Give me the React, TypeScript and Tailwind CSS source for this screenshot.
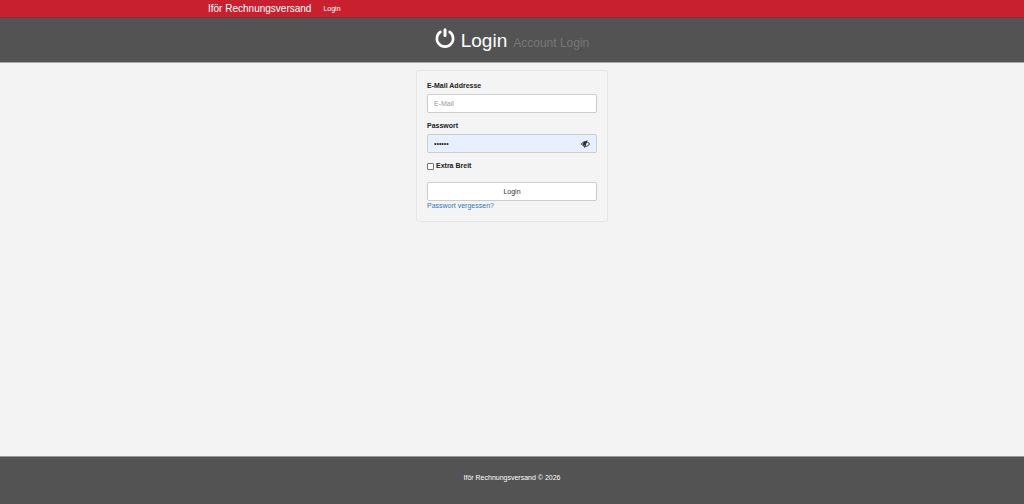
import { useState } from 'react'

function PowerIcon() {
  return (
    <svg viewBox="0 0 20 20" className="size-5 shrink-0" fill="none" stroke="currentColor" aria-hidden="true">
      <path d="M5.4 3.9A8.1 8.1 0 1 0 14.6 3.9" strokeWidth="2.6" strokeLinecap="round" />
      <path d="M10 1.8V7.6" strokeWidth="3" strokeLinecap="round" />
    </svg>
  )
}

function EyeSlashIcon() {
  return (
    <svg viewBox="0 0 18 16" className="h-2 w-[9px]" aria-hidden="true">
      <path d="M1 8C4 1.8 14 1.8 17 8C14 14.2 4 14.2 1 8Z" fill="none" stroke="currentColor" strokeWidth="1.8" />
      <path d="M9 3a5 5 0 0 0-3 9L11.4 3.6A5 5 0 0 0 9 3Z" fill="currentColor" />
      <path d="M12 0.8L7 15.2" stroke="currentColor" strokeWidth="2" />
    </svg>
  )
}

const field = 'block h-[19px] w-full rounded-xs border border-[#ccc] px-1.5 outline-none focus:border-[#66afe9]'

export default function App() {
  const [password, setPassword] = useState('secret')
  const [visible, setVisible] = useState(false)

  return (
    <div className="flex min-h-screen flex-col bg-[#f3f3f3] font-['Liberation_Sans',Arial,sans-serif] text-[7px] leading-[10px] text-[#222]">
      <nav className="h-[18px] border-b border-[#8a3038] bg-[#c9202f] text-white">
        <div className="mx-auto flex h-full max-w-[624px] items-center gap-3 px-2">
          <a href="#" className="text-[10px]">Iför Rechnungsversand</a>
          <a href="#login">Login</a>
        </div>
      </nav>

      <header className="flex h-[45px] items-center justify-center border-b border-[#aaa] bg-[#535353] text-white">
        <h1 className="flex items-baseline gap-1.5 text-[19px] leading-5">
          <span className="self-center pb-1"><PowerIcon /></span>
          <span className="pt-1">Login</span>
          <small className="text-[12px] text-[#777]">Account Login</small>
        </h1>
      </header>

      <main className="grow pt-[7px]">
        <form
          className="mx-auto w-full max-w-48 rounded-xs border border-[#e7e7e7] bg-[#f4f4f4] p-2.5"
          onSubmit={(e) => e.preventDefault()}
        >
          <label htmlFor="email" className="mb-[3px] block font-bold">E-Mail Addresse</label>
          <input id="email" type="email" placeholder="E-Mail" className={`${field} bg-white placeholder:text-[#999]`} />

          <label htmlFor="password" className="mt-2 mb-[3px] block font-bold">Passwort</label>
          <div className="relative">
            <input
              id="password"
              type={visible ? 'text' : 'password'}
              value={password}
              onChange={(e) => setPassword(e.target.value)}
              className={`${field} bg-[#e8f0fe]`}
            />
            <button
              type="button"
              aria-label="Passwort anzeigen"
              onClick={() => setVisible(!visible)}
              className="absolute inset-y-0 right-[7px] flex items-center"
            >
              <EyeSlashIcon />
            </button>
          </div>

          <label className="mt-2 mb-[11px] flex items-center gap-0.5 font-bold">
            <input type="checkbox" className="size-[7px] appearance-none rounded-[1px] border border-[#767676] bg-white checked:bg-[#337ab7]" />
            Extra Breit
          </label>

          <button type="submit" className="block h-[19px] w-full rounded-xs border border-[#ccc] bg-white text-[#333]">
            Login
          </button>
          <a href="#reset" className="block w-fit text-[#337ab7]">Passwort vergessen?</a>
        </form>
      </main>

      <footer className="flex h-12 items-center justify-center border-t border-[#999] bg-[#535353] pb-1.5 text-white">
        <p>Iför Rechnungsversand © 2026</p>
      </footer>
    </div>
  )
}
